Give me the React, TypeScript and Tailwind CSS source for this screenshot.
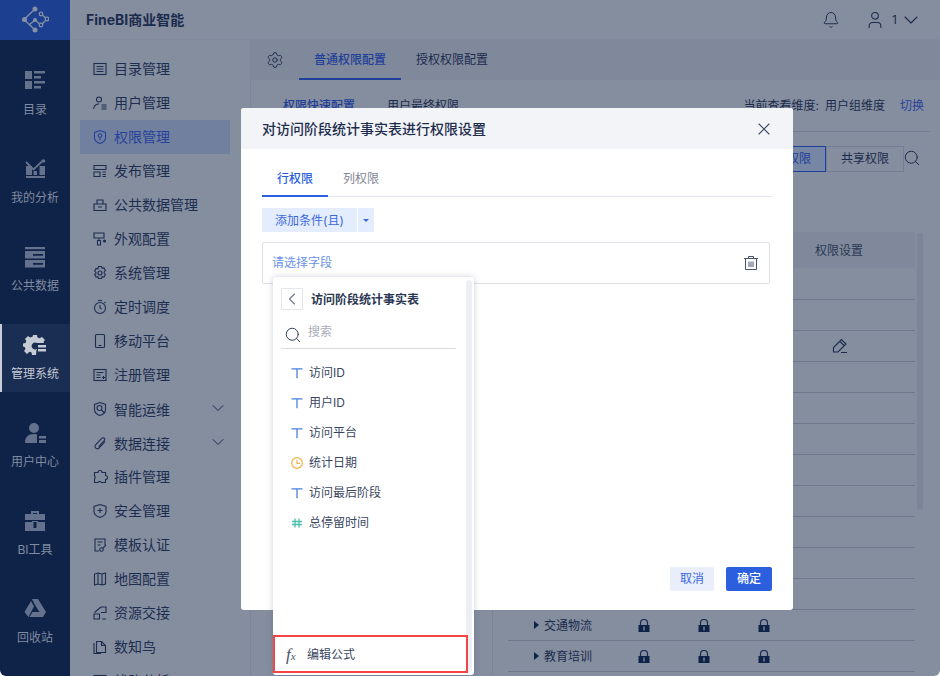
import { Bell, ChevronDown, ChevronLeft, Search, Settings, User, X } from "lucide-react";
import type { ReactNode } from "react";

const font = { fontFamily: '"Inter", "Noto Sans CJK SC", sans-serif' };

function Stroke({ children, className = "" }: { children: ReactNode; className?: string }) {
  return (
    <svg viewBox="0 0 16 16" fill="none" stroke="currentColor" strokeWidth="1.1" className={"h-4 w-4 shrink-0 " + className}>
      {children}
    </svg>
  );
}

const menu: { label: string; icon: ReactNode; arrow?: boolean; active?: boolean }[] = [
  { label: "目录管理", icon: <Stroke><rect x="2" y="2.5" width="12" height="11" /><path d="M4.5 5.5h7M4.5 8h7M4.5 10.5h7" /></Stroke> },
  { label: "用户管理", icon: <Stroke><circle cx="7" cy="4.5" r="2.5" /><path d="M1.5 14c.5-3 2.5-5 5.5-5M9.5 10h5M9.5 12h5M9.5 14h5" /></Stroke> },
  { label: "权限管理", active: true, icon: <Stroke><path d="M8 1.500l5.500 2v5c0 3-2.500 5-5.500 6-3-1-5.500-3-5.500-6v-5z" /><circle cx="8" cy="6.500" r="1.800" /><path d="M8 8.300v3" /></Stroke> },
  { label: "发布管理", icon: <Stroke><path d="M2 2.500h12v4H2zM2 9h6v4.500H2zM10.500 9h3.500M10.500 11.500h3.500M10.500 13.500h3.500" /></Stroke> },
  { label: "公共数据管理", icon: <Stroke><path d="M2 7h12v6.500H2zM5 7V3h6v4M6 10h4" /></Stroke> },
  { label: "外观配置", icon: <Stroke><path d="M2 2h10v5H2zM7 7v2M5.500 9.500h3v4.500h-3z" /><circle cx="12.500" cy="10" r="1" fill="currentColor" /></Stroke> },
  { label: "系统管理", icon: <Stroke><path d="M6.500 1.500h3l.6 1.800 1.800-.4 1.500 2.600-1.300 1.400 0 1.200 1.300 1.400-1.500 2.600-1.800-.4-.6 1.800h-3l-.6-1.800-1.800.4-1.500-2.600L3.900 8.600V7.400L2.600 6 4.100 3.400l1.800.4z" /><circle cx="8" cy="8" r="2" /></Stroke> },
  { label: "定时调度", icon: <Stroke><circle cx="8" cy="9" r="5.500" /><path d="M6 1.500h4M8 6v3l1.500 1M12.500 3l1 1" /></Stroke> },
  { label: "移动平台", icon: <Stroke><rect x="3.500" y="1.500" width="9" height="13" rx="1" /><path d="M6.500 12.500h3" /></Stroke> },
  { label: "注册管理", icon: <Stroke><rect x="2" y="2.500" width="12" height="11" /><path d="M4.500 5.500h7M4.500 8h4M4.500 10.500h4M10 10.500h3M11.500 9v3" /></Stroke> },
  { label: "智能运维", arrow: true, icon: <Stroke><path d="M8 1.500l5.500 2v5c0 3-2.500 5-5.500 6-3-1-5.500-3-5.500-6v-5z" /><circle cx="7.500" cy="7" r="2.500" /><path d="M9.500 9l3 3" /></Stroke> },
  { label: "数据连接", arrow: true, icon: <Stroke><path d="M13 6.500l-6 6.500c-1.500 1.500-4 .5-4-1.500 0-.7.3-1.200.8-1.800l6-6.400c1-1 3-.5 3 1 0 .5-.2 1-.6 1.400l-5.500 6" /></Stroke> },
  { label: "插件管理", icon: <Stroke><path d="M6 3.500a2 2 0 0 1 4 0h3.500v3a2 2 0 0 1 0 4v3H9.500a2 2 0 0 0-3.500 0H2.500v-3.500a2 2 0 0 0 0-3V3.500z" /></Stroke> },
  { label: "安全管理", icon: <Stroke><path d="M8 1.500l6 2v5c0 3-3 5-6 6-3-1-6-3-6-6v-5z" /><path d="M5.500 7.500h5M8 5v5" /></Stroke> },
  { label: "模板认证", icon: <Stroke><path d="M13 8V2H3v12h4M5.500 5h5M5.500 8h3" /><circle cx="9.500" cy="12.500" r="1.800" /><path d="M11 11l3-3" /></Stroke> },
  { label: "地图配置", icon: <Stroke><path d="M2.500 3l3.500-1 4 1 3.500-1v11l-3.500 1-4-1-3.500 1zM6 2v11M10 3v11" /></Stroke> },
  { label: "资源交接", icon: <Stroke><path d="M2 9h5.500v5H2zM9 2h5v5.500H9M9 2L2.500 7.500M10 14h4" /></Stroke> },
  { label: "数知鸟", icon: <Stroke><path d="M4.500 2.500h5l4 4v7h-9z" /><path d="M9.500 2.500v4h4M2 4v10.500h7" /></Stroke> },
  { label: "线路分析", icon: <Stroke><rect x="2" y="2.500" width="12" height="11" /></Stroke> },
];

const rail: { label: string; active?: boolean; icon: ReactNode }[] = [
  { label: "目录", icon: <path d="M2 1h7v8H2zM11 1h11v2.500H11zM11 6h7v2.500h-7zM2 11h7v8H2zM11 11h11v2.500H11zM11 16h7v2.500h-7z" /> },
  {
    label: "我的分析",
    icon: (
      <>
        <path d="M3 4l7.500 7.500L20 2.500" fill="none" stroke="currentColor" strokeWidth="1.800" />
        <circle cx="20.500" cy="3" r="1.800" />
        <path d="M3 8h6v9H3zM10.500 13h3.500v4h-3.500zM16.500 8H22v9h-5.500zM3 18h19v2H3z" />
      </>
    ),
  },
  { label: "公共数据", icon: <path d="M2 1h20v2.200H2zM2 5h20v7.500H2zm8 3v1.800h10V8zM2 14h20v7.500H2zm8 3v1.800h10V17z" fillRule="evenodd" /> },
  { label: "管理系统", active: true, icon: <path d="M10 1h4l.5 2.500 2 .8L19 3l3 3-1.500 2 .5 1h-7a3.500 3.500 0 1 0 0 6v1h-.5l-.5 5h-4l-.5-2.500-2-.8L4 20l-3-3 1.500-2-.8-2L0 12.500v-3l2.500-.5.800-2L2 5l3-3 2 1.500 2.500-.8zM15 11h8v2.500h-8zM15 15h8v2.500h-8z" /> },
  { label: "用户中心", icon: <path d="M11 1a5 5 0 1 1 0 10 5 5 0 0 1 0-10zM2 21c0-6 3-9 9-9 1 0 2 .1 3 .4V21zM16 14h7v2.500h-7zM16 18h7v3h-7z" /> },
  { label: "BI工具", icon: <path d="M8 1h8v3h6v6H2V4h6zm2 2v1h4V3zM2 12h7v-1h6v1h7v9H2zm8.500-.0v6h3v-6z" fillRule="evenodd" /> },
  { label: "回收站", icon: <path d="M9 1h6l8 13-3.500 5-8-13zM8 3l3 5.500L5.500 19 1.500 14zM9.500 14H23l-3 5H6.500z" /> },
];

const lineClass = "h-[31px] border-b border-[#6d788c]";

function Lock() {
  return (
    <svg viewBox="0 0 12 13" className="h-[13px] w-3">
      <path d="M2.500 6V4a3.500 3.500 0 0 1 7 0v2" fill="none" stroke="#1a2c52" strokeWidth="1.200" />
      <rect x="0.500" y="6" width="11" height="7" fill="#0f2248" />
      <rect x="5.300" y="7.500" width="1.400" height="4" fill="#7d8798" />
    </svg>
  );
}

function TableRow({ label }: { label: string }) {
  return (
    <div className="flex h-[31px] items-center border-b border-[#6d788c] pl-[26px]">
      <span className="h-0 w-0 border-y-[4px] border-l-[5px] border-y-transparent border-l-[#0f2248]" />
      <span className="ml-[5px] w-[48px] pt-[2px] text-xs text-[#1a2a4c]">{label}</span>
      <div className="ml-[46px] flex w-[132px] justify-between">
        <Lock />
        <Lock />
        <Lock />
      </div>
    </div>
  );
}

function Dialog() {
  return (
    <div className="absolute top-[108px] left-[241px] flex h-[502px] w-[552px] flex-col rounded-[3px] bg-white text-[#1f2d4d]">
      <div className="flex h-[41px] items-center justify-between rounded-t-[3px] bg-[#f2f4f8] pr-[19px] pl-[21px]">
        <span className="text-sm font-medium">对访问阶段统计事实表进行权限设置</span>
        <X size={20} strokeWidth={1.300} className="text-[#3d4a66]" />
      </div>
      <div className="mt-[15px] ml-[21px] flex h-[33px] w-[510px] border-b border-[#e3e6ef] text-xs">
        <div className="-mb-px flex h-[33px] w-[66px] items-center justify-center border-b-2 border-[#2b5fde] pb-[2px] font-medium text-[#2b5fde]">行权限</div>
        <div className="flex h-[31px] w-[66px] items-center justify-center pb-px text-[#7f8694]">列权限</div>
      </div>
      <div className="mt-[11px] ml-[21px] flex h-6 text-xs text-[#3a68dd]">
        <div className="flex w-[95px] items-center justify-center bg-[#e3edfd] pt-px">添加条件(且)</div>
        <div className="ml-px flex w-4 items-center justify-center bg-[#e3edfd]">
          <span className="h-0 w-0 border-x-[3px] border-t-[3px] border-x-transparent border-t-[#3a68dd]" />
        </div>
      </div>
      <div className="mt-[10px] ml-[21px] flex h-[42px] w-[508px] items-center justify-between rounded-[2px] border border-[#dfe1ea] pr-[10px] pl-[9px] text-xs text-[#6a93e8]">
        <span>请选择字段</span>
        <svg viewBox="0 0 16 16" fill="none" stroke="#46536e" strokeWidth="1" className="h-4 w-4">
          <path d="M1 3.500h14M5.500 3.500V1.500h5v2M2.500 3.500v11h11v-11M6 6.500v5.500M8 6.500v5.500M10 6.500v5.500" />
        </svg>
      </div>
      <div className="mt-auto mr-[21px] mb-[19px] flex justify-end gap-3 text-xs">
        <div className="flex h-6 w-11 items-center justify-center rounded-[2px] bg-[#e9eefa] text-[#3a68dd]">取消</div>
        <div className="flex h-6 w-[46px] items-center justify-center rounded-[2px] bg-[#2b5fde] font-medium text-white">确定</div>
      </div>
    </div>
  );
}

function FieldIcon({ kind }: { kind: string }) {
  if (kind === "date") {
    return (
      <svg viewBox="0 0 12 12" fill="none" stroke="#f2b04a" strokeWidth="1.200" className="h-3 w-3">
        <circle cx="6" cy="6" r="5.300" />
        <path d="M6 3v3.300h3" />
      </svg>
    );
  }
  if (kind === "num") {
    return (
      <svg viewBox="0 0 12 12" fill="none" stroke="#4cc0ab" strokeWidth="1.300" className="h-3 w-3">
        <path d="M4 1.500v9M8 1.500v9M1 4.500h10M1 7.500h10" />
      </svg>
    );
  }
  return (
    <svg viewBox="0 0 12 12" fill="none" stroke="#4a80e0" strokeWidth="1.300" className="h-3 w-3">
      <path d="M0.500 1.800h11M6 1.800v9.500" />
    </svg>
  );
}

const fields = [
  { label: "访问ID", kind: "text" },
  { label: "用户ID", kind: "text" },
  { label: "访问平台", kind: "text" },
  { label: "统计日期", kind: "date" },
  { label: "访问最后阶段", kind: "text" },
  { label: "总停留时间", kind: "num" },
];

function FieldPicker() {
  return (
    <div className="absolute top-[277px] left-[273px] flex h-[398px] w-[201px] flex-col rounded-[3px] bg-white text-[#3a465f] shadow-[0_0_6px_rgba(40,50,90,0.22)]">
      <div className="absolute top-[3px] right-[2px] h-[392px] w-[6px] rounded-[3px] bg-[#eeeff4]" />
      <div className="mt-[11px] ml-2 flex h-[22px] items-center">
        <div className="flex h-[22px] w-[22px] items-center justify-center border border-[#e3e6ef]">
          <ChevronLeft size={20} strokeWidth={1.300} className="text-[#6b7587]" />
        </div>
        <span className="ml-2 pt-px text-xs font-bold text-[#2c3853]">访问阶段统计事实表</span>
      </div>
      <div className="mt-[9px] ml-2 flex h-[30px] w-[175px] border-b border-[#d9dce6] pl-[3px]">
        <Search size={18} strokeWidth={1.300} className="mt-[7px] text-[#2f3b57]" />
        <span className="mt-[5px] ml-[6px] text-xs text-[#a9aeba]">搜索</span>
      </div>
      <div className="mt-[9px] flex flex-col pl-[18px] text-xs">
        {fields.map((f) => (
          <div key={f.label} className="flex h-[30px] items-center gap-[6px]">
            <FieldIcon kind={f.kind} />
            <span>{f.label}</span>
          </div>
        ))}
      </div>
      <div className="relative mt-auto mb-[2px] flex h-[38px] w-[195px] items-center border-2 border-[#f44545] bg-white pl-[11px] text-xs">
        <span className="w-[21px] text-[17px] leading-none text-[#46536e] italic" style={{ fontFamily: '"Liberation Serif", serif' }}>
          f<span className="text-[11px]">x</span>
        </span>
        <span className="pt-px">编辑公式</span>
      </div>
    </div>
  );
}

export default function App() {
  return (
    <div className="relative h-[676px] w-[940px] overflow-hidden rounded-b-[6px] bg-white" style={font}>
      <div className="flex h-full">
        <div className="flex w-[70px] shrink-0 flex-col bg-[#0f2248]">
          <div className="flex h-10 items-center justify-center bg-[#1c3f8f]">
            <svg viewBox="20 6 28 28" className="h-[28px] w-[28px]" fill="none" stroke="#8690a6" strokeWidth="1.300">
              <path d="M34 9L23 19.500 34 30M28 25l6-5 6 5 6-6-6-5" />
              <circle cx="34" cy="9" r="2.500" fill="#8690a6" stroke="none" />
              <circle cx="23.500" cy="19.500" r="2.500" fill="#8690a6" stroke="none" />
              <circle cx="34" cy="30" r="2.500" fill="#8690a6" stroke="none" />
              <circle cx="34" cy="20" r="2" fill="#8690a6" stroke="none" />
              <circle cx="40" cy="14" r="1.800" fill="#1c3f8f" />
              <circle cx="46" cy="19" r="1.800" fill="#1c3f8f" />
              <circle cx="40" cy="25" r="1.800" fill="#1c3f8f" />
            </svg>
          </div>
          <div className="flex flex-col gap-5 pt-5">
            {rail.map((r) => (
              <div key={r.label} className={"flex h-[68px] flex-col items-center pt-[10px] text-xs " + (r.active ? "border-l-2 border-[#c8ccd6] bg-[#1a2d52] pr-[2px] text-[#c5cad4]" : "text-[#7f8ba0]")}>
                <svg viewBox="0 0 24 24" fill="currentColor" className={"h-6 w-6 " + (r.active ? "text-[#c5cad4]" : "text-[#65728d]")}>
                  {r.icon}
                </svg>
                <span className="mt-[7px] leading-[18px]">{r.label}</span>
              </div>
            ))}
          </div>
        </div>

        <div className="flex min-w-0 flex-1 flex-col bg-[#858e9f]">
          <div className="flex h-10 shrink-0 items-center justify-between border-b border-[#7f899b] pr-[23px] pl-4 text-[#1c2b4d]">
            <span className="text-sm font-bold">FineBI商业智能</span>
            <div className="flex items-center">
              <Bell size={18} strokeWidth={1.300} />
              <User size={20} strokeWidth={1.300} className="ml-[25px]" />
              <span className="mr-[2px] ml-[7px] text-xs">1</span>
              <ChevronDown size={24} strokeWidth={1.100} className="-mr-[6px]" />
            </div>
          </div>

          <div className="flex min-h-0 flex-1">
            <div className="flex w-[180px] shrink-0 flex-col pt-3 pr-5 pl-[10px]">
              {menu.map((m) => (
                <div key={m.label} className={"flex h-[34px] shrink-0 items-center gap-[6px] pr-[2px] pl-3 text-sm " + (m.active ? "bg-[#72809f] text-[#27429a]" : "text-[#1d2d50]")}>
                  {m.icon}
                  <span className={"flex-1 " + (m.arrow ? "pt-px" : "")}>{m.label}</span>
                  {m.arrow && <ChevronDown size={20} strokeWidth={1.200} className="-mt-[2px]" />}
                </div>
              ))}
            </div>

            <div className="flex min-w-0 flex-1 flex-col border-l border-[#7c8698]">
              <div className="flex h-10 shrink-0 items-center bg-[#7f899b] pl-[15px] text-xs text-[#1c2b4d]">
                <Settings size={18} strokeWidth={1.300} />
                <div className="ml-[15px] flex h-10 w-[102px] items-center justify-center border-b-2 border-[#1f3f98] pt-px font-medium text-[#1f3f98]">普通权限配置</div>
                <span className="ml-[15px]">授权权限配置</span>
              </div>
              <div className="mx-[10px] flex h-[52px] shrink-0 items-center border-b border-[#737e91] pr-[6px] pl-[22px] text-xs text-[#1c2b4d]">
                <span className="font-medium text-[#1f3f98]">权限快速配置</span>
                <span className="ml-[32px]">用户最终权限</span>
                <span className="ml-auto">当前查看维度:</span>
                <span className="ml-[6px]">用户组维度</span>
                <span className="ml-[15px] text-[#27429a]">切换</span>
              </div>
              <div className="mt-[14px] mr-[36px] flex h-[26px] shrink-0 justify-end text-xs text-[#1c2b4d]">
                <div className="flex w-[78px] items-center justify-center border border-[#1f3f98] bg-[#7686a4] text-[#1f3f98]">默认权限</div>
                <div className="flex w-[78px] items-center justify-center border border-[#737e91]">共享权限</div>
                <Search size={18} strokeWidth={1.300} className="absolute top-[149px] left-[903px]" />
              </div>
              <div className="mt-[60px] flex min-h-0 flex-1 pl-[241px]">
                <div className="flex w-[423px] shrink-0 flex-col border-l border-[#7a8497] pl-[15px]">
                  <div className="flex h-9 shrink-0 items-center justify-end bg-[#7f899b] pt-px pr-[52px] text-xs text-[#2a3853]">权限设置</div>
                  <div className="h-[32px] border-b border-[#6d788c]" />
                  <div className={lineClass} />
                  <div className="flex h-[31px] items-center justify-end border-b border-[#6d788c] pr-[67px] text-[#1c2b4d]">
                    <svg viewBox="0 0 16 16" fill="none" stroke="currentColor" strokeWidth="1.100" className="h-4 w-4">
                      <path d="M1.500 14V9.500L9.500 1.500l4.500 4.500-8 8zM8 3.500l4.500 4.500M9 14.500h6" />
                    </svg>
                  </div>
                  {Array.from({ length: 8 }).map((_, i) => (
                    <div key={i} className={lineClass} />
                  ))}
                  <TableRow label="交通物流" />
                  <TableRow label="教育培训" />
                </div>
                <div className="mt-px ml-[2px] h-[277px] w-[6px] rounded-[3px] bg-[#7c8698]" />
              </div>
            </div>
          </div>
        </div>
      </div>

      <Dialog />
      <FieldPicker />
    </div>
  );
}
